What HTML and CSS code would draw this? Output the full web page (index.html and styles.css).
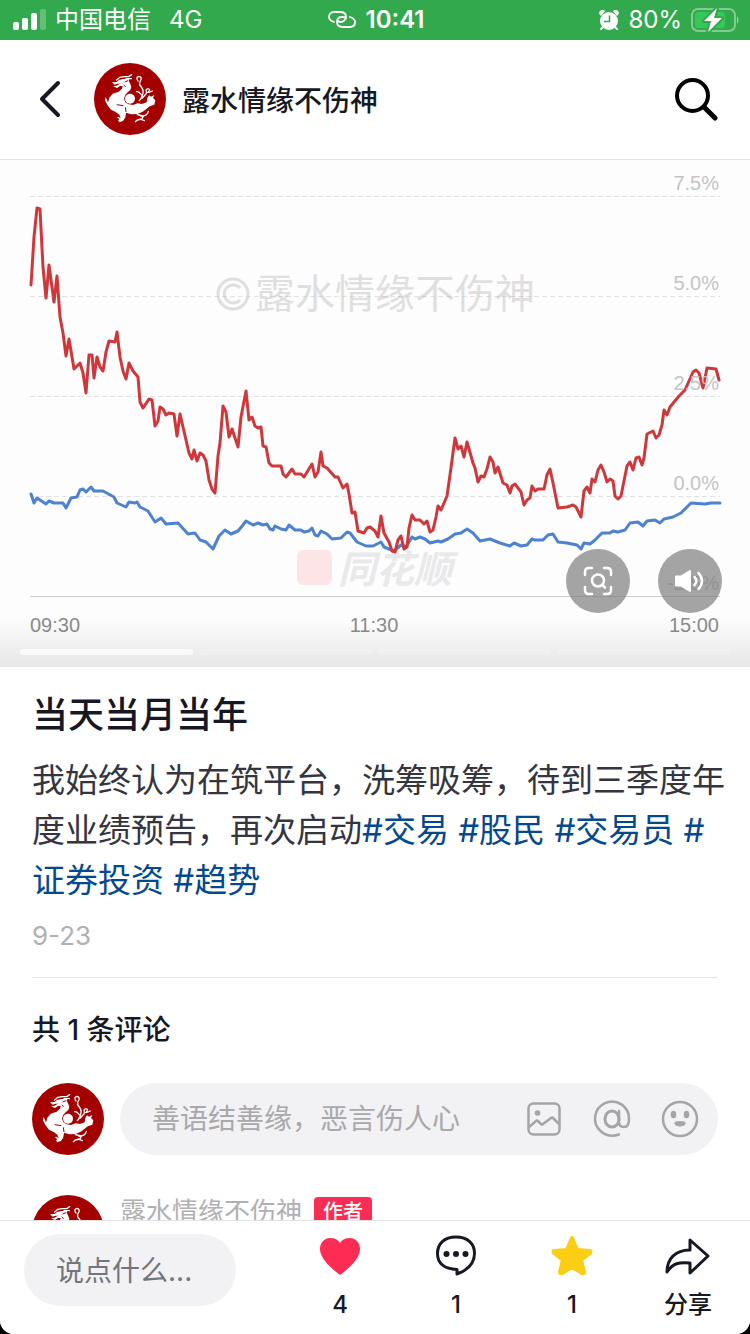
FILE: index.html
```html
<!DOCTYPE html>
<html lang="zh-CN">
<head>
<meta charset="utf-8">
<meta name="viewport" content="width=device-width, initial-scale=1">
<title>当天当月当年</title>
<link rel="stylesheet" href="styles.css">
</head>
<body>
<svg class="defs" aria-hidden="true">
  <symbol id="dragon" viewBox="-18 -15 216 216">
    <rect x="-18" y="-15" width="216" height="216" fill="#a40000"/>
    <g fill="#fff">
      <path d="M36 43 50 42 57 36 70 33 88 33 86 38 90 46 94 56 91 66 83 73 76 80 72 92 76 103 86 109 99 111 113 106 126 108 140 103 142 90 147 82 153 86 163 81 159 90 166 97 163 110 149 115 140 122 128 131 112 138 94 139 78 134 76 148 69 159 58 163 54 157 62 151 58 140 47 132 33 125 22 111 15 97 16 87 21 95 24 104 28 89 38 77 56 71 66 62 68 54 60 54 51 60 39 55 50 53 58 48 68 47 52 47 44 50z"/>
      <circle cx="90" cy="92" r="15"/>
    </g>
    <g fill="none" stroke="#fff" stroke-width="4" stroke-linecap="round" stroke-linejoin="round">
      <path d="M50 36 60 28 72 26 87 25 95 20M78 31l16 1M114 39q-8-11 3-14 11 3 4 14-6 9 3 18 9 12 3 25l-5 12m2-14q-8-11-14-9m16 20q8-9 12-13 3-9 0-11 3-7 9-4 4 4-1 7m-7 4q10 0 18-5M128 86l-10 12M74 138l-4 16m-10-2-6-4m62-9q8 9 14 5m0 0-4 9-14 3-6 5m14-8 13 5m-6-14q15-1 18-14m-15 14-18-4"/>
    </g>
    <path d="m84 38-10 4m-3 9 6 5M76 118l2 14m-28-22 20 3" fill="none" stroke="#a40000" stroke-width="3"/>
  </symbol>
</svg>

<div class="screen">
  <div class="status">
    <div class="status-side">
      <svg class="signal" viewBox="0 0 34 22" aria-hidden="true"><g fill="#fff"><rect y="13" width="6" height="8" rx="2"/><rect x="9" y="9" width="6" height="12" rx="2"/><rect x="18" y="4" width="6" height="17" rx="2"/><rect x="27" width="6" height="21" rx="2" opacity=".25"/></g></svg>
      <span class="carrier">中国电信</span>
      <span class="network">4G</span>
    </div>
    <div class="status-time">
      <svg class="link-icon" viewBox="0 0 28 18" fill="none" stroke="#fff" stroke-width="1.800" stroke-linecap="round" aria-hidden="true"><path d="M6 11C3 10 1 8 1 6c0-3 2-5 5-5h6c4 0 6 2 6 5s-3 5-5 5c-1 0-2 0-3-1"/><path d="M22 6c3 1 5 2 5 5s-2 5-5 5h-7c-4 0-6-2-6-5s2-5 5-5c2 0 3 0 4 1"/></svg>
      <span>10:41</span>
    </div>
    <div class="status-side status-right">
      <svg class="alarm" viewBox="0 0 20 21" aria-hidden="true"><g fill="#fff"><path d="M1 5a3 3 0 0 1 5-4L2 6zM19 5a3 3 0 0 0-5-4l4 5z"/><circle cx="10" cy="11" r="9"/></g><path d="m4 17-2 2m14-2 2 2" stroke="#fff" stroke-width="2" stroke-linecap="round"/><path d="M10.500 5.500V11.500H5" fill="none" stroke="#31a94c" stroke-width="1.500"/></svg>
      <span>80%</span>
      <svg class="battery" viewBox="0 0 48 24" aria-hidden="true"><rect x="1" y="1" width="43" height="22" rx="6" fill="none" stroke="#fff" stroke-opacity=".4" stroke-width="2"/><path d="M46 8q3 4 0 8z" fill="#fff" opacity=".5"/><rect x="4" y="4" width="30" height="16" rx="3" fill="#34c759"/><path d="M26 0 13 13h7l-3 11 14-14h-8l3-10z" fill="#fff" stroke="#31a94c" stroke-width="4" stroke-linejoin="round" paint-order="stroke"/></svg>
    </div>
  </div>

  <header class="topbar">
    <button class="icon-button back" aria-label="返回"><svg viewBox="0 0 22 38" fill="none" stroke="#161823" stroke-width="4" stroke-linecap="round" stroke-linejoin="round"><path d="M19 3 3 19l16 16"/></svg></button>
    <svg class="avatar" role="img" aria-label="头像"><use href="#dragon"/></svg>
    <h1 class="author">露水情缘不伤神</h1>
    <button class="icon-button search" aria-label="搜索"><svg viewBox="0 0 44 44" fill="none" stroke="#000" stroke-width="4" stroke-linecap="round"><circle cx="18.500" cy="18.500" r="15.500"/><path d="m30 30 11 11" stroke-width="5"/></svg></button>
  </header>

  <main class="content">
    <section class="media">
      <svg class="chart" viewBox="0 160 750 507" role="img" aria-label="分时走势图">
        <g class="grid"><path d="M30 196.500H720M30 296.500H720M30 396.500H720M30 496.500H720"/></g>
        <path class="axis" d="M30 596.500H720"/>
        <g class="mark"><rect x="297" y="550" width="35" height="35" rx="6"/><text x="338" y="583">同花顺</text></g>
        <path class="line blue" d="M31 494 34 503 37 498 46 504 49 501 54 503 63 503 66 508 71 498 77 497 80 490 83 489 86 492 91 487 94 491 103 491 114 497 117 503 126 507 129 502 135 503 137 502 140 507 148 511 155 522 161 518 166 524 178 523 188 534 195 533 200 540 206 542 213 549 219 536 225 530 231 534 238 531 243 525 246 521 253 525 258 523 263 525 267 524 270 529 273 530 275 526 281 529 286 530 289 525 295 530 301 530 304 532 309 531 312 528 315 535 318 536 321 531 327 534 332 539 341 538 347 532 350 533 357 542 366 546 373 546 381 542 384 547 394 551 401 545 406 547 412 537 415 539 420 537 425 539 430 543 438 541 441 542 448 539 455 534 461 533 467 529 473 533 480 541 490 539 500 543 510 546 514 543 521 546 527 545 532 539 535 540 543 540 548 535 553 534 558 542 567 543 577 545 581 549 584 543 590 544 595 540 602 533 610 533 613 531 618 532 625 530 630 523 638 522 643 526 647 521 655 520 660 523 664 519 673 517 681 513 691 503 705 504 711 503 720 503"/>
        <path class="line red" d="M31 285 34 237 37 208 40 209 43 267 46 298 49 265 54 302 57 276 60 317 63 333 66 356 69 339 74 369 80 363 83 373 86 393 89 355 92 355 94 378 97 357 100 367 103 371 106 352 109 341 115 342 117 332 120 357 123 371 126 379 129 363 133 371 138 377 140 402 143 408 149 399 152 400 155 426 158 421 160 407 163 409 166 415 169 413 174 414 177 436 180 414 189 453 192 459 194 450 197 461 200 453 203 455 206 461 209 480 212 489 215 493 218 456 220 443 223 406 226 412 229 437 232 429 238 447 241 417 246 391 249 420 252 417 255 426 258 428 261 427 263 446 266 447 269 463 272 466 281 466 283 474 286 477 292 469 295 474 301 474 304 477 312 464 315 477 318 472 321 452 323 466 327 468 335 477 338 477 343 488 347 484 349 494 352 513 355 512 358 531 364 533 367 528 370 527 375 531 378 537 381 516 384 533 389 542 392 551 395 552 398 540 401 536 404 549 407 547 409 528 412 515 415 520 420 520 424 524 427 521 430 532 433 530 436 517 438 506 441 510 447 496 450 475 455 438 458 449 461 446 464 457 467 442 473 463 475 468 478 482 481 476 484 477 487 469 490 457 493 462 495 473 498 467 503 483 507 485 510 493 512 486 515 484 521 492 524 505 527 500 530 498 532 486 535 491 538 489 544 489 547 475 550 469 553 483 558 508 567 507 573 505 576 507 581 517 584 491 587 487 590 493 592 479 595 482 598 470 601 465 604 472 607 482 610 479 613 481 615 496 618 499 621 496 627 466 630 462 633 470 636 458 639 457 642 465 644 458 647 434 653 431 656 438 659 435 662 425 664 410 667 415 670 407 679 396 685 390 693 372 696 370 699 373 703 388 707 368 716 369 719 380"/>
        <g class="ylabels"><text x="719" y="190">7.5%</text><text x="719" y="290">5.0%</text><text x="719" y="390">2.5%</text><text x="719" y="490">0.0%</text><text x="719" y="590">-2.5%</text></g>
        <g class="xlabels"><text x="30" y="632">09:30</text><text x="374" y="632" text-anchor="middle">11:30</text><text x="719" y="632" text-anchor="end">15:00</text></g>
        <g class="watermark"><circle cx="233" cy="294" r="15"/><path d="M240 288a9 9 0 1 0 0 12"/><text x="255" y="308">露水情缘不伤神</text></g>
      </svg>
      <div class="shade"><i class="seg on"></i><i class="seg"></i><i class="seg"></i><i class="seg"></i></div>
      <div class="media-tools">
        <button class="round" aria-label="识图"><svg viewBox="0 0 32 32" fill="none" stroke="#fff" stroke-width="2.500" stroke-linecap="round"><path d="M3 10V7q0-4 4-4h3m12 0h3q4 0 4 4v3m0 12v3q0 4-4 4h-3m-12 0H7q-4 0-4-4v-3"/><circle cx="16" cy="15.500" r="6"/><path d="m20.500 20 2.500 2.500"/></svg></button>
        <button class="round" aria-label="声音"><svg viewBox="0 0 32 32" fill="none" stroke="#fff" stroke-width="3" stroke-linecap="round"><path d="M2 11.500h5L16 6v20l-9-5.500H2z" fill="#fff" stroke-width="2" stroke-linejoin="round"/><path d="M20.500 12q4 4 0 8m4-12q7 8 0 16" stroke-width="2.500"/></svg></button>
      </div>
    </section>

    <article class="post">
      <h2 class="title">当天当月当年</h2>
      <p class="text">我始终认为在筑平台，洗筹吸筹，待到三季度年度业绩预告，再次启动<a href="#">#交易</a> <a href="#">#股民</a> <a href="#">#交易员</a> <a href="#">#证券投资</a> <a href="#">#趋势</a></p>
      <time class="date">9-23</time>
    </article>

    <section class="comments">
      <h3 class="count">共 1 条评论</h3>
      <div class="compose">
        <svg class="avatar" aria-hidden="true"><use href="#dragon"/></svg>
        <div class="field">
          <input class="field-input" type="text" aria-label="评论" placeholder="善语结善缘，恶言伤人心">
          <button class="icon-button tool" aria-label="图片"><svg viewBox="0 0 36 36" fill="none" stroke="#a5a5a9" stroke-width="2.500" stroke-linejoin="round"><rect x="2.500" y="2.500" width="31" height="31" rx="5"/><path d="m3 26 7-6q1-1 2 0l3 3q1 1 2 0l8-6q1-1 2 0l6 6"/><circle cx="11.500" cy="12" r="2.800" fill="#a5a5a9" stroke="none"/></svg></button>
          <button class="icon-button tool" aria-label="提及"><svg viewBox="0 0 36 36" fill="none" stroke="#a5a5a9" stroke-width="2.500" stroke-linecap="round"><path d="M25 33.500Q15 37 7 30.500A17 17 0 1 1 35 18c0 5-2 8-5 8-4 0-5-2-5-5V10"/><ellipse cx="18" cy="18" rx="7" ry="8" stroke-width="3"/></svg></button>
          <button class="icon-button tool" aria-label="表情"><svg viewBox="0 0 36 36"><circle cx="18" cy="18" r="17" fill="none" stroke="#a5a5a9" stroke-width="2.500"/><g fill="#a5a5a9"><ellipse cx="11.500" cy="13.500" rx="2.800" ry="3.800"/><ellipse cx="24.500" cy="13.500" rx="2.800" ry="3.800"/><path d="M12.500 21q5.500-2 11 0 1 4-5.500 4.500-6.500-.5-5.500-4.500z"/></g></svg></button>
        </div>
      </div>
      <div class="comment">
        <svg class="avatar" aria-hidden="true"><use href="#dragon"/></svg>
        <span class="nick">露水情缘不伤神</span>
        <span class="tag">作者</span>
      </div>
    </section>
  </main>

  <footer class="actions">
    <input class="say" type="text" aria-label="说点什么" placeholder="说点什么...">
    <div class="action-list">
      <button class="action"><svg viewBox="0 0 48 44"><path d="M24 41Q4 26 4 15C4 8 9 4 14 4q7 0 10 5 3-5 10-5c5 0 10 4 10 11q0 11-20 26z" fill="#fe2c55"/></svg><span>4</span></button>
      <button class="action"><svg viewBox="0 0 48 44"><path d="M24 3C12 3 5.500 10 5.500 19.500S12 35 25 35.500v4.500c11-4 17.500-11 17.500-21C42.500 10 36 3 24 3z" fill="none" stroke="#161823" stroke-width="3" stroke-linejoin="round"/><g fill="#161823"><circle cx="14.500" cy="20" r="3"/><circle cx="24" cy="20" r="3"/><circle cx="33.500" cy="20" r="3"/></g></svg><span>1</span></button>
      <button class="action"><svg viewBox="0 0 48 44"><path d="m24 4 5 12 13 1q1 0 0 2L33 26l3 12q0 2-2 1l-10-6-10 6q-2 1-2-1l3-12-9-7q-1-2 0-2l13-1z" fill="#face15" stroke="#face15" stroke-width="4" stroke-linejoin="round"/></svg><span>1</span></button>
      <button class="action"><svg viewBox="0 0 48 44" fill="none" stroke="#161823" stroke-width="3" stroke-linejoin="round"><path d="M26 6v10C11 16 3 25 3 38c6-9 12-10 23-9v10l18-17z"/></svg><span>分享</span></button>
    </div>
  </footer>
</div>
</body>
</html>
```
FILE: styles.css
```css
* { box-sizing: border-box; }
body {
  margin: 0;
  background: #000;
  color: #161823;
  font-family: Inter, "Noto Sans CJK SC", sans-serif;
}
h1, h2, h3, p { margin: 0; }
button {
  padding: 0;
  border: 0;
  background: none;
  color: inherit;
  font: inherit;
}
input {
  min-width: 0;
  border: 0;
  outline: 0;
  background: none;
  font: inherit;
}
.defs { position: absolute; width: 0; height: 0; }
.screen {
  display: flex;
  flex-direction: column;
  height: 100vh;
  overflow: hidden;
  border-radius: 0 0 14px 14px;
  background: #fff;
}

.status {
  display: flex;
  flex: none;
  align-items: center;
  height: 40px;
  padding: 0 11px 0 13px;
  background: #31a94c;
  color: #fff;
  font-size: 24px;
  line-height: 42px;
}
.status-side { display: flex; flex: 1; align-items: center; }
.status-right { justify-content: flex-end; gap: 9px; }
.status-time { display: flex; align-items: center; gap: 10px; font-weight: 600; }
.signal { width: 34px; height: 22px; }
.carrier { margin: 0 18px 0 8px; }
.link-icon { width: 28px; height: 18px; }
.alarm { width: 20px; height: 21px; }
.battery { width: 48px; height: 24px; }

.topbar {
  display: flex;
  flex: none;
  align-items: center;
  height: 120px;
  padding: 0 32px 2px;
  border-bottom: 1px solid #e3e3e4;
}
.icon-button { display: grid; flex: none; place-items: center; }
.back { width: 36px; height: 72px; margin-right: 26px; }
.back svg { width: 22px; height: 38px; }
.avatar { flex: none; width: 72px; height: 72px; border-radius: 50%; }
.author { flex: 1; margin-left: 16px; font-size: 28px; font-weight: 500; }
.search svg { width: 44px; height: 44px; }

.content { flex: 1; min-height: 0; overflow: hidden; }
.media { position: relative; background: #fdfdfd; }
.chart { display: block; width: 100%; font-family: "Liberation Sans", "Noto Sans CJK SC", sans-serif; }
.grid path { stroke: #e2e2e2; stroke-dasharray: 5 3; }
.axis { stroke: #ccc; }
.line { fill: none; stroke-width: 3; stroke-linejoin: round; stroke-linecap: round; }
.red { stroke: #d0373b; }
.blue { stroke: #4c82d0; }
.ylabels { fill: #c4c4c6; font-size: 20px; text-anchor: end; }
.xlabels { fill: #8c8c8c; font-size: 20px; }
.watermark { font-size: 40px; font-family: "Noto Sans CJK SC", sans-serif; opacity: .4; }
.watermark text { fill: #b4b4b4; }
.watermark circle, .watermark path { fill: none; stroke: #b4b4b4; stroke-width: 3; }
.mark rect { fill: #fde4e7; }
.mark text { fill: #e9e9eb; font-size: 38px; font-weight: 700; font-style: italic; }
.shade {
  position: absolute;
  inset: auto 0 0;
  display: flex;
  gap: 6px;
  align-items: flex-end;
  height: 50px;
  padding: 0 20px 12px;
  background: linear-gradient(transparent, rgba(0, 0, 0, .09));
}
.seg { flex: 1; height: 6px; border-radius: 3px; background: rgba(255, 255, 255, .2); }
.on { background: rgba(255, 255, 255, .7); }
.media-tools { position: absolute; right: 28px; bottom: 54px; display: flex; gap: 28px; }
.round {
  display: grid;
  place-items: center;
  width: 64px;
  height: 64px;
  border-radius: 50%;
  background: rgba(126, 126, 126, .7);
}
.round svg { width: 32px; height: 32px; }

.post { margin: 0 32px; padding: 22px 0; border-bottom: 1px solid #e3e3e4; }
.title { font-size: 36px; font-weight: 500; line-height: 52px; }
.text { margin: 14px -8px 0 0; font-size: 33px; line-height: 50px; color: #34353f; }
.text a { color: #04498d; text-decoration: none; }
.date { display: block; margin-top: 12px; font-size: 26px; line-height: 38px; color: #b0b0b4; }

.comments { padding: 32px 32px 0; }
.count { font-size: 28px; font-weight: 500; line-height: 40px; }
.compose { display: flex; gap: 16px; margin-top: 33px; }
.field {
  display: flex;
  flex: 1;
  align-items: center;
  gap: 32px;
  min-width: 0;
  padding: 0 20px 0 32px;
  border-radius: 36px;
  background: #f2f2f4;
}
.field-input { flex: 1; padding: 0; font-size: 28px; }
.field-input::placeholder { color: #a9a9ad; opacity: 1; }
.tool svg { width: 36px; height: 36px; overflow: visible; }
.comment { display: flex; align-items: flex-start; margin-top: 40px; }
.nick { margin: 0 12px 0 16px; font-size: 26px; line-height: 34px; color: #b0b0b4; }
.tag {
  margin-top: 2px;
  padding: 0 9px;
  border-radius: 4px;
  background: #fe2c55;
  color: #fff;
  font-size: 20px;
  font-weight: 500;
  line-height: 30px;
}

.actions {
  display: flex;
  flex: none;
  align-items: flex-start;
  gap: 46px;
  height: 114px;
  padding: 13px 4px 0 24px;
  border-top: 1px solid #e3e3e4;
  background: #fff;
}
.say { width: 212px; height: 72px; padding: 2px 32px 0; border-radius: 36px; background: #f2f2f4; font-size: 28px; }
.say::placeholder { color: #74757c; opacity: 1; }
.action-list { display: flex; flex: 1; }
.action { display: flex; flex: 1; flex-direction: column; align-items: center; gap: 10px; font-size: 24px; font-weight: 500; line-height: 34px; }
.action svg { width: 48px; height: 44px; }
```
